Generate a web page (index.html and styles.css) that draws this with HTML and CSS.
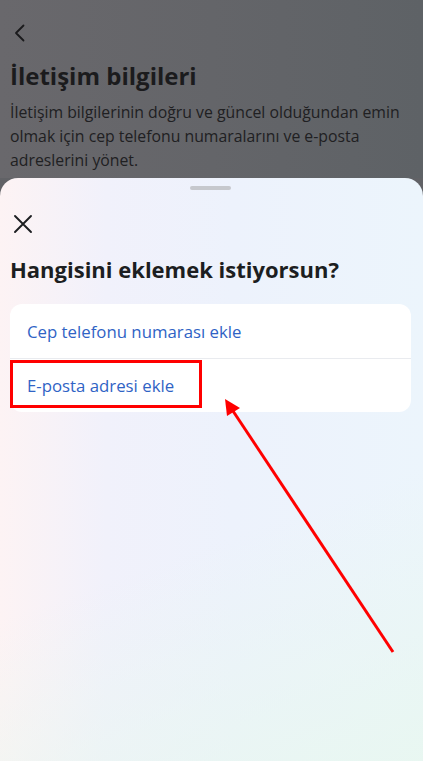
FILE: index.html
```html
<!DOCTYPE html>
<html lang="tr">
<head>
<meta charset="utf-8">
<link rel="stylesheet" href="styles.css">
</head>
<body>
<div class="screen">
  <header class="behind">
    <div class="back">
      <svg width="14" height="18" viewBox="0 0 14 18"><path d="M10.5 1.5 L3 9 L10.5 16.5" fill="none" stroke="#1a1a1c" stroke-width="1.8" stroke-linecap="round" stroke-linejoin="round"/></svg>
    </div>
    <h1 class="title">İletişim bilgileri</h1>
    <p class="desc">İletişim bilgilerinin doğru ve güncel olduğundan emin olmak için cep telefonu numaralarını ve e-posta adreslerini yönet.</p>
  </header>
  <section class="sheet">
    <div class="handle"></div>
    <div class="close">
      <svg width="20" height="20" viewBox="0 0 20 20"><path d="M2 2 L18 18 M18 2 L2 18" fill="none" stroke="#1c1e21" stroke-width="1.9" stroke-linecap="round"/></svg>
    </div>
    <h2 class="heading">Hangisini eklemek istiyorsun?</h2>
    <div class="card">
      <div class="row">Cep telefonu numarası ekle</div>
      <div class="row row-mark">E-posta adresi ekle<span class="mark"></span></div>
    </div>
  </section>
  <svg class="arrow" width="423" height="761" viewBox="0 0 423 761">
    <line x1="393" y1="652" x2="231" y2="408" stroke="#ff0000" stroke-width="3"/>
    <polygon points="225,399 240,408 227,416" fill="#ff0000"/>
  </svg>
</div>
</body>
</html>
```
FILE: styles.css
```css
* { box-sizing: border-box; }
html, body { margin: 0; padding: 0; }
body {
  font-family: "Open Sans", "Noto Sans", "Liberation Sans", sans-serif;
  background: #616266;
}
.screen {
  position: relative;
  width: 423px;
  height: 761px;
  display: flex;
  flex-direction: column;
  overflow: hidden;
}
.behind {
  height: 178px;
  flex: none;
  background: linear-gradient(90deg, #69686c 0%, #646569 50%, #5e6266 100%);
  padding: 24px 10px 0 10px;
  color: #1b1b1d;
}
.back {
  height: 18px;
  padding-left: 3px;
  display: flex;
  align-items: center;
}
.title {
  margin: 18px 0 0 0;
  font-size: 24px;
  font-weight: 700;
  line-height: 32px;
  letter-spacing: 0;
}
.desc {
  margin: 8px 0 0 0;
  font-size: 15.8px;
  line-height: 24px;
  color: #202022;
}
.sheet {
  flex: 1;
  border-radius: 18px 18px 0 0;
  background:
    linear-gradient(160deg, rgba(255,255,255,0) 60%, rgba(232,247,240,0.9) 100%),
    linear-gradient(90deg, #fdf3f4 0%, #f1f1fb 25%, #edf2fc 55%, #ecf5fc 100%);
  padding: 8px 12px 0 10px;
  display: flex;
  flex-direction: column;
}
.handle {
  align-self: center;
  width: 41px;
  height: 4px;
  border-radius: 2px;
  background: #c6c8cd;
}
.close {
  margin-top: 24px;
  padding-left: 3px;
  height: 20px;
  display: flex;
  align-items: center;
}
.heading {
  margin: 20px 0 0 0;
  font-size: 22px;
  font-weight: 700;
  line-height: 30px;
  color: #1c1e21;
}
.card {
  margin-top: 20px;
  background: #ffffff;
  border-radius: 12px;
  display: flex;
  flex-direction: column;
}
.row {
  position: relative;
  height: 54px;
  display: flex;
  align-items: center;
  padding-left: 17px;
  font-size: 16.8px;
  font-weight: 500;
  color: #2f63c5;
}
.row + .row {
  border-top: 1px solid #e9ebef;
}
.mark {
  position: absolute;
  left: 0;
  top: 1px;
  width: 192px;
  height: 48px;
  border: 3px solid #ff0000;
}
.arrow {
  position: absolute;
  left: 0;
  top: 0;
  pointer-events: none;
}
```
